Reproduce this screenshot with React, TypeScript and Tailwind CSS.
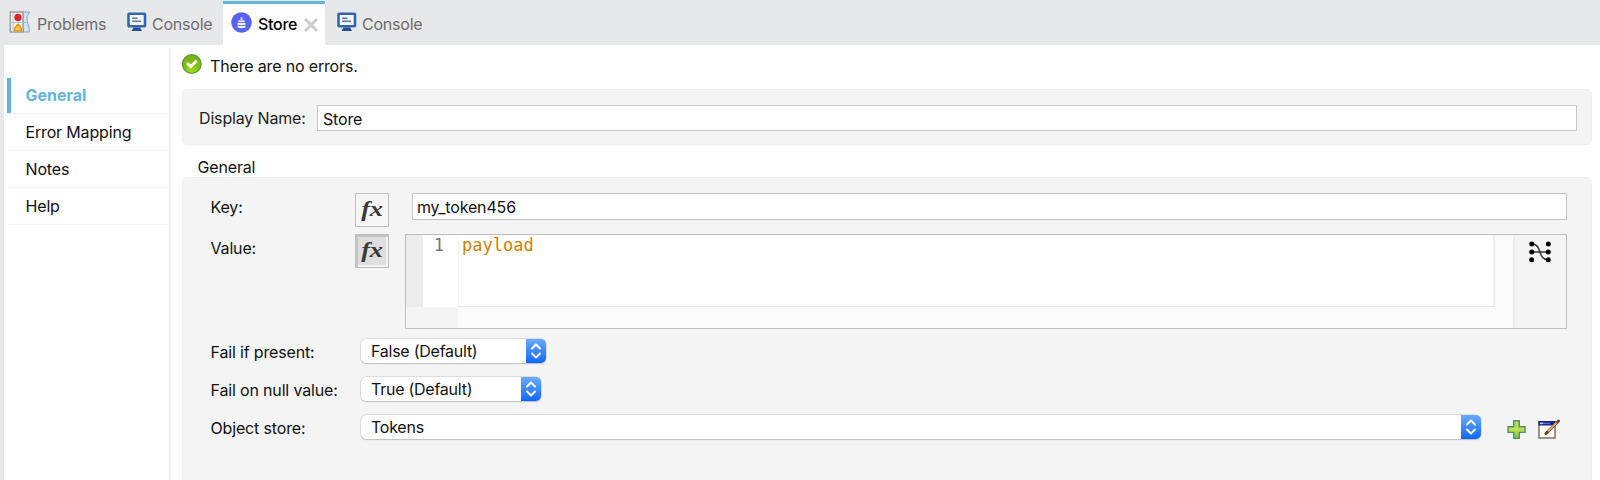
import type { ReactNode } from "react";

function ProblemsIcon() {
  return (
    <svg width="22" height="22" viewBox="0 0 22 22">
      <path d="M14 1H20.500Q16.500 6 18.300 11Q20.300 16 20.500 21H14Z" fill="#d3e3f3" stroke="#8ea6bf" strokeWidth="1" />
      <rect x="1.200" y="1" width="13" height="20" fill="#fbf5e8" stroke="#8e9197" strokeWidth="1.300" />
      <path d="M4 1.500V20.500M1.500 11.500H17.500" stroke="#a9c3df" strokeWidth="1" />
      <path d="M14.300 1.500V20.500" stroke="#8eacd0" strokeWidth="1.200" />
      <circle cx="9" cy="6.500" r="3.700" fill="#dc2430" />
      <path d="M5.500 19.800V17.500L9 13L12.500 17.500V19.800Z" fill="#fcc44c" stroke="#e3930f" strokeWidth="1.300" strokeLinejoin="round" />
    </svg>
  );
}

function ConsoleIcon() {
  return (
    <svg width="20" height="20" viewBox="0 0 20 20">
      <rect x="1.500" y="2.800" width="16.500" height="12.500" rx="0.800" fill="#f3f7fc" stroke="#3465ac" strokeWidth="2.600" />
      <path d="M5 7.200H10.500M5 10.200H14" stroke="#6077a8" strokeWidth="1.400" />
      <path d="M6.500 16.500H13L15 19.900H4.500Z" fill="#24508f" />
    </svg>
  );
}

function StoreIcon() {
  return (
    <svg width="21" height="21" viewBox="0 0 21 21">
      <circle cx="10.500" cy="10.500" r="10.300" fill="#5b63f6" />
      <path d="M10.500 5V8M9 6.800H12" stroke="#c8cbff" strokeWidth="1.200" />
      <rect x="7" y="8.300" width="7" height="1.900" rx="0.900" fill="#d9dbff" />
      <path d="M6.500 11H14.500V12.700Q10.500 13.600 6.500 12.700ZM6.500 13.700Q10.500 14.600 14.500 13.700V15.200Q10.500 17 6.500 15.200Z" fill="#fff" />
    </svg>
  );
}

function CheckIcon() {
  return (
    <svg width="21" height="22" viewBox="0 0 21 22">
      <defs>
        <linearGradient id="ok" x1="0" y1="0" x2="0" y2="1">
          <stop offset="0" stopColor="#78b010" />
          <stop offset="0.600" stopColor="#7fbf08" />
          <stop offset="1" stopColor="#a4ea1c" />
        </linearGradient>
      </defs>
      <circle cx="9.800" cy="10" r="9.300" fill="url(#ok)" stroke="#5f9440" strokeWidth="1.300" />
      <path d="M5 9L8.700 12.600L14.700 6.700" fill="none" stroke="#fff" strokeWidth="3" />
    </svg>
  );
}

function MapperIcon() {
  return (
    <svg width="22" height="22" viewBox="0 0 22 22">
      <path d="M2.500 3C14 3 8 18.700 19 18.700M2.500 11H19" fill="none" stroke="#333" strokeWidth="1.500" />
      {[3, 11, 18.7].map((y) => (
        <g key={y}>
          <circle cx="2.700" cy={y} r="2.500" />
          <circle cx="19.300" cy={y} r="2.500" />
        </g>
      ))}
    </svg>
  );
}

function PlusIcon() {
  return (
    <svg width="19" height="20" viewBox="0 0 19 20">
      <defs>
        <linearGradient id="plus" x1="0" y1="0" x2="0" y2="1">
          <stop offset="0" stopColor="#b5d65a" />
          <stop offset="0.500" stopColor="#bfe052" />
          <stop offset="1" stopColor="#74c043" />
        </linearGradient>
      </defs>
      <path d="M6.700 0.800H12.300V6.800H18V12.400H12.300V18.400H6.700V12.400H1V6.800H6.700Z" fill="url(#plus)" stroke="#55906a" strokeWidth="1.400" />
    </svg>
  );
}

function EditIcon() {
  return (
    <svg width="22" height="21" viewBox="0 0 22 21">
      <rect x="1" y="3" width="16" height="16" fill="#fdfcf8" stroke="#77746a" strokeWidth="1.500" />
      <rect x="0.400" y="2" width="17.200" height="4.500" fill="#15258c" />
      <path d="M2 4.400H12" stroke="#5673c8" strokeWidth="1.300" />
      <path d="M2 4.400H5" stroke="#c3d6fb" strokeWidth="1.500" />
      <path d="M8 14.500L20.500 2" stroke="#5d432c" strokeWidth="2.900" strokeLinecap="round" />
      <path d="M10 12.300L18.500 3.800" stroke="#dca35a" strokeWidth="2" />
    </svg>
  );
}

function Tab({ icon, label, className }: { icon: ReactNode; label: string; className: string }) {
  return (
    <div className={`flex shrink-0 items-start pt-[11px] tracking-[-0.22px] text-[#6b6d6f] ${className}`}>
      {icon}
      <span className="mt-[3px] leading-5">{label}</span>
    </div>
  );
}

function Stepper() {
  return (
    <span className="flex h-full w-[20px] shrink-0 items-center justify-center bg-linear-to-b from-[#69aafb] to-[#0a66fb]">
      <svg width="12" height="16" viewBox="0 0 12 16" fill="none" stroke="#fff" strokeWidth="1.900" strokeLinecap="round" strokeLinejoin="round">
        <path d="M2 5.500L6 1.500L10 5.500M2 10.500L6 14.500L10 10.500" />
      </svg>
    </span>
  );
}

function Select({ value, className }: { value: string; className: string }) {
  return (
    <div className={`mt-[1px] flex h-6 items-center overflow-hidden rounded-[5px] bg-white shadow-[0_0_0_0.5px_#c6c6c6,0_1px_1px_#bbb] ${className}`}>
      <span className="flex-1 pl-[10px] tracking-[-0.25px]">{value}</span>
      <Stepper />
    </div>
  );
}

function FxButton({ pressed }: { pressed?: boolean }) {
  return (
    <button
      className={`flex size-[34px] shrink-0 items-center justify-center border-[1.500px] border-[#c0c0c0] font-['Liberation_Serif',serif] text-[22px] leading-none font-bold text-[#3a3a3a] italic ${
        pressed ? "bg-[#dedede] shadow-[inset_2px_2px_0_#c4c4c4,inset_-2px_-2px_0_#f2f2f2]" : "bg-[#f6f6f6]"
      }`}
    >
      <span className="-mt-[3px] ml-px scale-x-120">fx</span>
    </button>
  );
}

const sections = ["General", "Error Mapping", "Notes", "Help"];

export default function App() {
  return (
    <div className="flex h-[480px] w-[1600px] flex-col overflow-hidden bg-[#e7e8ea] font-[Inter,sans-serif] text-[16px] leading-5 tracking-[-0.16px] text-[#111]">
      <header className="flex h-[45px] shrink-0 items-start pl-[9px]">
        <Tab icon={<ProblemsIcon />} label="Problems" className="w-[118px] gap-[6px]" />
        <Tab icon={<ConsoleIcon />} label="Console" className="w-[96px] gap-[5px]" />
        <div className="mt-[1px] flex h-[44px] w-[102px] shrink-0 items-start border-t-[3px] border-[#64b5dc] bg-white pl-[8px] text-black">
          <span className="mt-[8px]"><StoreIcon /></span>
          <span className="mt-[10px] ml-[6px] w-[46px] leading-5 font-medium tracking-[-0.3px]">Store</span>
          <svg className="mt-[14px]" width="14" height="14" viewBox="0 0 14 14" stroke="#ccc" strokeWidth="3">
            <path d="M1 1L13 13M13 1L1 13" />
          </svg>
        </div>
        <Tab icon={<ConsoleIcon />} label="Console" className="ml-[12px] gap-[5px]" />
      </header>

      <div className="ml-1 flex min-h-0 flex-1 bg-white">
        <nav className="mt-[3px] w-[167px] shrink-0 border-r-2 border-[#efefef] pt-[29px] pl-[3px]">
          {sections.map((name, i) => (
            <div
              key={name}
              className={`mr-px flex h-[37px] items-center border-b border-[#f3f3f3] ${
                i === 0 ? "font-bold tracking-normal text-[#64b5dc]" : ""
              }`}
            >
              <span className={`h-[35px] w-1 ${i === 0 ? "bg-[#64b5dc]" : ""}`} />
              <span className="ml-[14.500px]">{name}</span>
            </div>
          ))}
        </nav>

        <main className="flex min-w-0 flex-1 flex-col pr-[8px] pl-[11px]">
          <div className="flex h-[44px] shrink-0 pt-[9px]">
            <CheckIcon />
            <span className="mt-[2px] ml-[7px]">There are no errors.</span>
          </div>

          <section className="flex h-[56px] shrink-0 items-center rounded-[5px] border border-[#efefef] bg-[#f4f4f4] pt-[2px] pr-[14px] pl-[16px]">
            <label className="w-[118px] text-[#222]">Display Name:</label>
            <div className="flex h-[26px] flex-1 items-center border-[1.500px] border-[#c8c8c8] bg-white pt-px pl-[5px]">Store</div>
          </section>

          <h2 className="mt-[12px] ml-[15.500px] h-[20px] shrink-0">General</h2>

          <section className="flex flex-1 flex-col rounded-t-[5px] border border-b-0 border-[#efefef] bg-[#f4f4f4] pt-[15px] pl-[27.500px]">
            <div className="flex h-[41px] shrink-0">
              <label className="mt-[4px] w-[144.500px]">Key:</label>
              <FxButton />
              <div className="ml-[23px] flex h-[27px] w-[1155px] items-center border-[1.500px] border-[#c4c4c4] bg-white pl-1">my_token456</div>
            </div>

            <div className="flex h-[104px] shrink-0">
              <label className="mt-[4px] w-[144.500px]">Value:</label>
              <FxButton pressed />
              <div className="ml-[16px] flex h-[95px] w-[1162px] border-[1.500px] border-[#c0c0c0]">
                <div className="flex w-[1107px] flex-col bg-[#fafafa] font-['DejaVu_Sans_Mono',monospace] text-[17px] tracking-normal">
                  <div className="flex h-[72px] shrink-0">
                    <span className="w-[17px] bg-[#ececec]" />
                    <span className="w-[35px] bg-white pr-[14px] text-right text-[#777]">1</span>
                    <span className="w-[1037px] border-r-2 border-b border-l border-[#eee] border-b-[#e6e6e6] border-l-[#f4f4f4] bg-white pl-[3px] text-[#cb8400]">payload</span>
                  </div>
                  <span className="w-[52px] flex-1 bg-[#f4f4f4]" />
                </div>
                <div className="flex-1 border-l-2 border-[#eee] pt-[6px] pl-[14px]">
                  <MapperIcon />
                </div>
              </div>
            </div>

            <div className="flex h-[38px] shrink-0">
              <label className="mt-[4px] w-[150.500px]">Fail if present:</label>
              <Select value="False (Default)" className="w-[185px]" />
            </div>
            <div className="flex h-[38px] shrink-0">
              <label className="mt-[4px] w-[150.500px]">Fail on null value:</label>
              <Select value="True (Default)" className="w-[180px]" />
            </div>
            <div className="flex h-[40px] shrink-0">
              <label className="mt-[4px] w-[150.500px]">Object store:</label>
              <Select value="Tokens" className="w-[1120px]" />
              <span className="mt-[6px] ml-[26px]"><PlusIcon /></span>
              <span className="mt-[5px] ml-[12px]"><EditIcon /></span>
            </div>
          </section>
        </main>
      </div>
    </div>
  );
}
